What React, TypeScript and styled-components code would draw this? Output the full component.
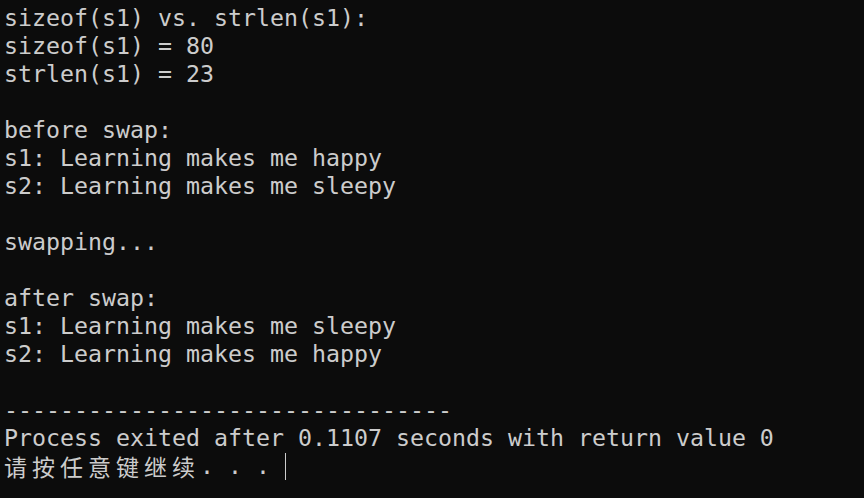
import React from "react";
import styled, { createGlobalStyle } from "styled-components";

const Global = createGlobalStyle`
  html, body {
    margin: 0;
    padding: 0;
    background: #0c0c0c;
  }
  #root {
    min-height: 100vh;
    background: #0c0c0c;
  }
`;

const Terminal = styled.div`
  display: flex;
  flex-direction: column;
  padding: 4px 0 0 4px;
  width: 864px;
  height: 498px;
  box-sizing: border-box;
  background: #0c0c0c;
  color: #cccccc;
  font-family: "DejaVu Sans Mono", "Liberation Mono", monospace;
  font-size: 23.25px;
  overflow: hidden;
`;

const Line = styled.div`
  height: 28px;
  line-height: 28px;
  white-space: pre;
  display: flex;
  align-items: center;
`;

const Cjk = styled.span`
  font-family: "Noto Sans CJK SC", sans-serif;
  font-size: 23px;
  letter-spacing: 5px;
`;

const Cursor = styled.span`
  display: inline-block;
  width: 1px;
  height: 27px;
  background: #cccccc;
  margin-left: 1px;
`;

const lines = [
  "sizeof(s1) vs. strlen(s1):",
  "sizeof(s1) = 80",
  "strlen(s1) = 23",
  "",
  "before swap:",
  "s1: Learning makes me happy",
  "s2: Learning makes me sleepy",
  "",
  "swapping...",
  "",
  "after swap:",
  "s1: Learning makes me sleepy",
  "s2: Learning makes me happy",
  "",
  "--------------------------------",
  "Process exited after 0.1107 seconds with return value 0",
];

export default function App() {
  return (
    <>
      <Global />
      <Terminal>
        {lines.map((l, i) => (
          <Line key={i}>{l}</Line>
        ))}
        <Line>
          <Cjk>请按任意键继续</Cjk>
          {". . . "}
          <Cursor />
        </Line>
      </Terminal>
    </>
  );
}
